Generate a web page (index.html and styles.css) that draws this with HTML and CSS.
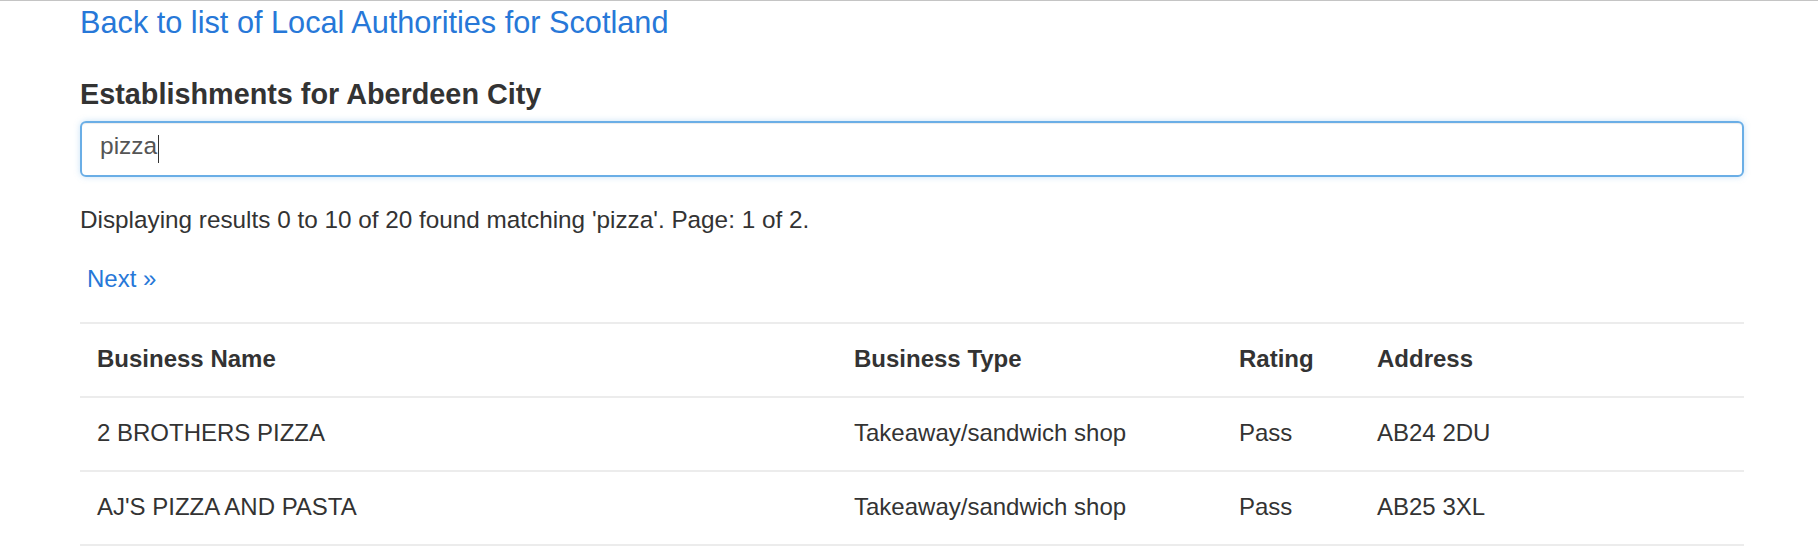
FILE: index.html
```html
<!DOCTYPE html>
<html lang="en">
<head>
<meta charset="utf-8">
<title>Establishments for Aberdeen City</title>
<link rel="stylesheet" href="styles.css">
</head>
<body>
<div class="page">
  <p class="back"><a href="#">Back to list of Local Authorities for Scotland</a></p>
  <h4 class="title">Establishments for Aberdeen City</h4>
  <div class="search" role="textbox">pizza<span class="caret"></span></div>
  <p class="summary">Displaying results 0 to 10 of 20 found matching 'pizza'. Page: 1 of 2.</p>
  <p class="pager"><a href="#">Next &raquo;</a></p>
  <table class="results">
    <colgroup>
      <col class="c-name">
      <col class="c-type">
      <col class="c-rating">
      <col class="c-address">
    </colgroup>
    <thead>
      <tr><th>Business Name</th><th>Business Type</th><th>Rating</th><th>Address</th></tr>
    </thead>
    <tbody>
      <tr><td>2 BROTHERS PIZZA</td><td>Takeaway/sandwich shop</td><td>Pass</td><td>AB24 2DU</td></tr>
      <tr><td>AJ'S PIZZA AND PASTA</td><td>Takeaway/sandwich shop</td><td>Pass</td><td>AB25 3XL</td></tr>
    </tbody>
  </table>
</div>
</body>
</html>
```
FILE: styles.css
```css
html, body {
  margin: 0;
  background: #fff;
}
body {
  border-top: 1px solid #c4c4c4;
  font-family: "Liberation Sans", Arial, Helvetica, sans-serif;
  color: #333;
}
.page {
  width: 1664px;
  padding: 2px 0 0 80px;
}
a {
  color: #2778d8;
  text-decoration: none;
}
.back {
  margin: 0;
  font-size: 30.7px;
  line-height: 40px;
}
.title {
  margin: 33px 0 0;
  font-size: 28.8px;
  line-height: 36px;
  font-weight: bold;
  color: #333;
}
.search {
  box-sizing: border-box;
  margin-top: 9px;
  height: 56px;
  padding: 0 18px;
  border: 2px solid #6aaee6;
  border-radius: 6px;
  box-shadow: inset 0 1px 1px rgba(0,0,0,.075), 0 0 6px rgba(102,175,233,.35);
  font-size: 24.5px;
  line-height: 45px;
  color: #555;
}
.caret {
  display: inline-block;
  width: 1px;
  height: 28px;
  margin-left: 1px;
  background: #333;
  vertical-align: -9px;
}
.summary {
  margin: 26px 0 0;
  font-size: 24.3px;
  line-height: 34px;
}
.pager {
  margin: 25px 0 0;
  padding-left: 7px;
  font-size: 24px;
  line-height: 34px;
}
.results {
  margin-top: 26px;
  width: 1664px;
  border-collapse: collapse;
  table-layout: fixed;
  font-size: 24px;
  line-height: 36px;
}
.c-name { width: 757px; }
.c-type { width: 385px; }
.c-rating { width: 138px; }
.c-address { width: 384px; }
.results th,
.results td {
  padding: 17px 17px 19px;
  text-align: left;
  border-top: 2px solid #ececec;
  border-bottom: 2px solid #ececec;
  white-space: nowrap;
}
.results th {
  font-weight: bold;
}
```
